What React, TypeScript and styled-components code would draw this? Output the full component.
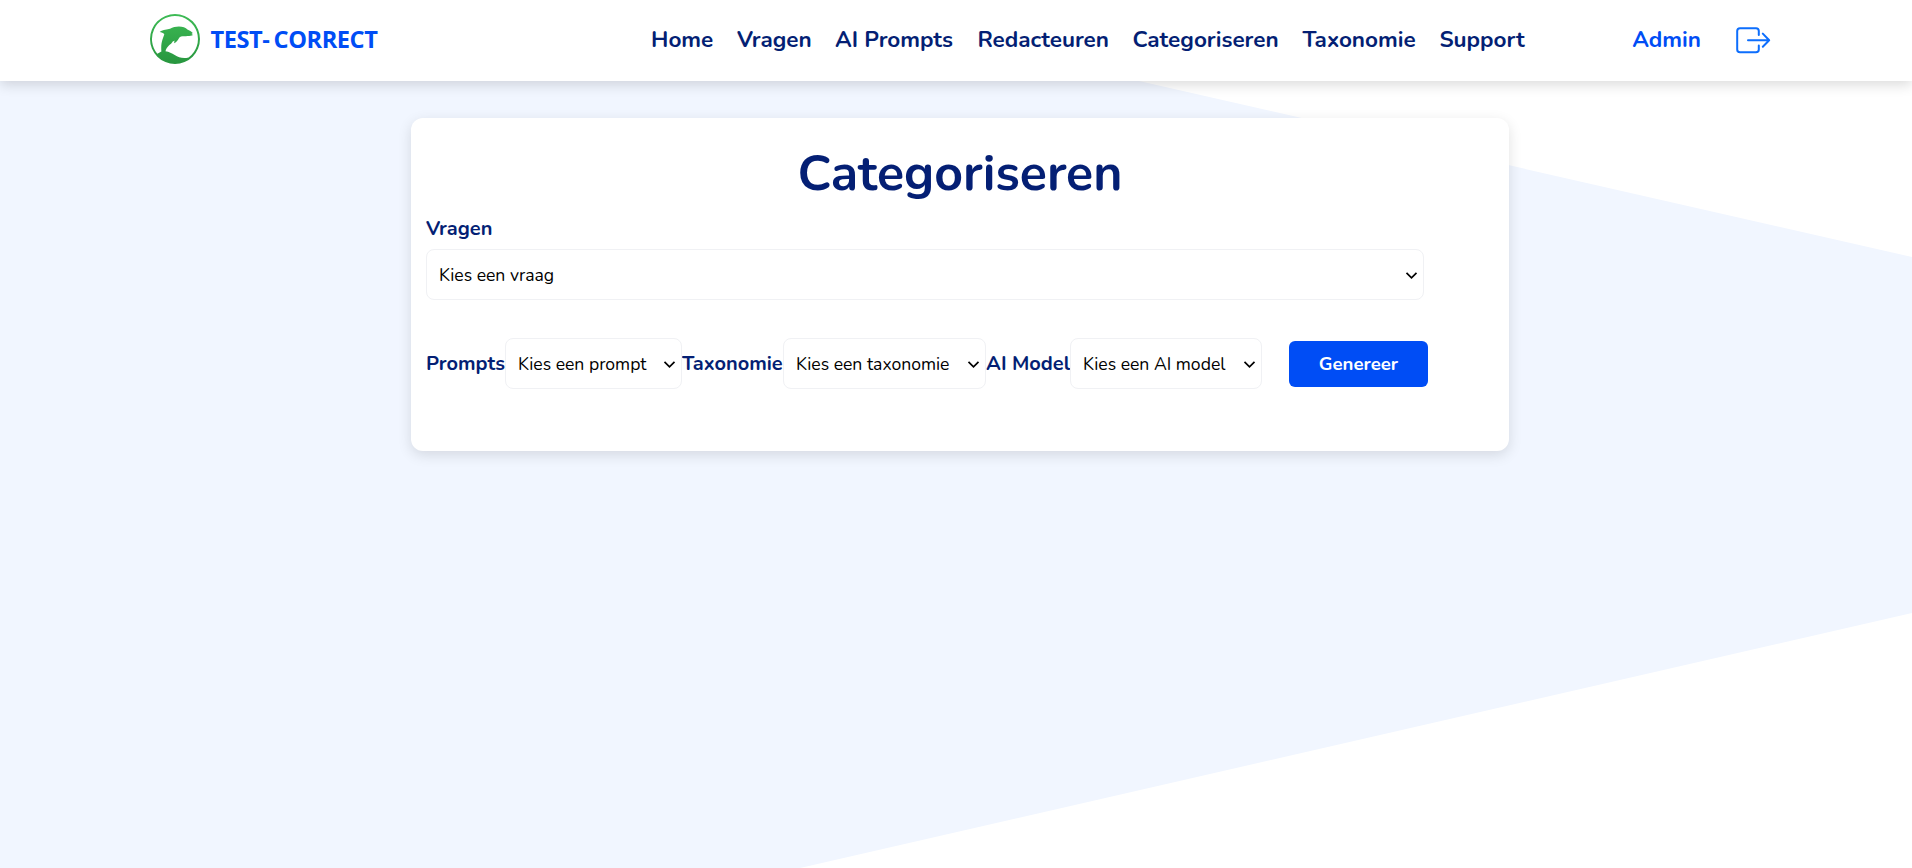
import React from 'react';
import styled, { createGlobalStyle } from 'styled-components';

const GlobalStyle = createGlobalStyle`
  *, *::before { box-sizing: border-box; }
  body { margin: 0; background: #fff; overflow: hidden; }
  body, select, button { font-family: Nunito, Lato, sans-serif; }
`;

const Page = styled.div`
  display: flex;
  flex-direction: column;
  height: 868px;
`;

const Header = styled.header`
  position: relative;
  z-index: 1;
  display: flex;
  align-items: center;
  flex: none;
  height: 81px;
  padding: 0 141px 0 150px;
  background: #fff;
  box-shadow: 0 4px 12px rgba(0, 0, 0, 0.14);
`;

const Brand = styled.a`
  display: flex;
  align-items: center;
  gap: 10.5px;
  width: 501px;
  padding-bottom: 3px;
`;

const BrandName = styled.span`
  display: flex;
  gap: 4px;
  font: 700 23.6px/32px 'Open Sans', sans-serif;
  letter-spacing: -0.42px;
  color: #004df5;
`;

const Nav = styled.nav`
  display: flex;
  flex: 1;
  padding-bottom: 1px;
`;

const NavLink = styled.a<{ $width: number }>`
  width: ${({ $width }) => $width}px;
  font-size: 22.5px;
  line-height: 30px;
  font-weight: 700;
  color: #041f74;
  white-space: nowrap;
`;

const Account = styled.div`
  display: flex;
  align-items: center;
  gap: 35px;
`;

const UserName = styled.span`
  padding-bottom: 1px;
  font-size: 22.5px;
  line-height: 30px;
  font-weight: 700;
  color: #004df5;
`;

const Main = styled.main`
  position: relative;
  flex: 1;
  padding: 37px 403px 0 411px;
  &::before {
    content: '';
    position: absolute;
    inset: 0;
    z-index: -1;
    background: #f1f6ff;
    clip-path: polygon(0 0, 1139px 0, 1912px 176px, 1912px 532px, 800px 787px, 0 787px);
  }
`;

const Card = styled.section`
  height: 333px;
  padding: 15px;
  border-radius: 12px;
  background: #fff;
  box-shadow: 0 4px 14px rgba(0, 0, 0, 0.12);
`;

const Title = styled.h1`
  margin: 7px 0 7px;
  font-size: 50px;
  line-height: 68px;
  font-weight: 700;
  text-align: center;
  color: #041f74;
`;

const Label = styled.label<{ $width?: number }>`
  display: block;
  flex: none;
  width: ${({ $width }) => ($width ? `${$width}px` : 'auto')};
  font-size: 20px;
  line-height: 27px;
  font-weight: 700;
  white-space: nowrap;
  color: #041f74;
`;

const SelectBox = styled.div<{ $width: number }>`
  position: relative;
  flex: none;
  width: ${({ $width }) => $width}px;
  svg {
    position: absolute;
    right: 6px;
    top: 22px;
    pointer-events: none;
  }
`;

const SelectField = styled.select`
  display: block;
  appearance: none;
  width: 100%;
  height: 51px;
  padding: 1px 12px 0;
  border: 1px solid #f0f1f4;
  border-radius: 8px;
  background: #fff;
  font-size: 17.6px;
  color: #000;
`;

const Question = styled.div`
  display: flex;
  flex-direction: column;
  gap: 7px;
`;

const Controls = styled.div`
  display: flex;
  align-items: center;
  margin-top: 38px;
  ${Label} { padding-bottom: 1px; }
`;

const Generate = styled.button`
  width: 139px;
  height: 46px;
  margin-left: 27px;
  padding: 0;
  border: 0;
  border-radius: 6px;
  background: #004df5;
  font-size: 18.6px;
  font-weight: 700;
  color: #fff;
`;

const DolphinLogo = () => (
  <svg width="50" height="50" viewBox="0 0 50 50">
    <defs>
      <linearGradient id="leaf" x1="0" y1="0" x2="0" y2="1">
        <stop offset="0" stopColor="#3dbb55" />
        <stop offset="1" stopColor="#28963f" />
      </linearGradient>
    </defs>
    <path fill="url(#leaf)" fillRule="evenodd" d="M25 0A25 25 0 1 1 25 50A25 25 0 1 1 25 0ZM25 2A23 23 0 0 0 7.3 39.7L11.4 37.6C10.5 28 13.3 24 14.3 20.2C13.1 18.8 11.4 18.3 9.7 18C13.4 15.3 17.3 15.8 20 14.8C26 11.1 34.7 11.9 37.4 15.6C39.3 16.6 41.7 17.6 42.8 19.1L41.5 19.9L43 20.9C40.5 22.7 35 21.5 31 22.5C28.4 23.2 28.4 27.3 24.1 29.2L24.5 26.5L22.5 27.8C21.3 30.5 16.5 32 15.5 37.3C23.8 38.5 28.3 46.3 38.6 43.5A23 23 0 0 0 25 2Z" />
  </svg>
);

const LogoutIcon = () => (
  <svg width="35" height="27" viewBox="0 0 35 27" fill="none" stroke="#0d6efd" strokeWidth="2" strokeLinecap="round" strokeLinejoin="round">
    <path d="M22.8 8V4Q22.8 1.2 20 1.2H4Q1.2 1.2 1.2 4V22.4Q1.2 25.2 4 25.2H20Q22.8 25.2 22.8 22.4V18.4M12 13.2H33.2M26.8 6.6L33.2 13.2L26.8 19.8" />
  </svg>
);

const Select = ({ text, width }: { text: string; width: number }) => (
  <SelectBox $width={width}>
    <SelectField><option>{text}</option></SelectField>
    <svg width="13" height="9" viewBox="0 0 13 9" fill="none" stroke="#000" strokeWidth="1.7">
      <path d="M1.5 1.8L6.5 6.8L11.5 1.8" />
    </svg>
  </SelectBox>
);

const links: [string, number][] = [
  ['Home', 86], ['Vragen', 98], ['AI Prompts', 142.4], ['Redacteuren', 155],
  ['Categoriseren', 170], ['Taxonomie', 137], ['Support', 88],
];

export default function App() {
  return (
    <Page>
      <GlobalStyle />
      <Header>
        <Brand>
          <DolphinLogo />
          <BrandName><span>TEST-</span><span>CORRECT</span></BrandName>
        </Brand>
        <Nav>
          {links.map(([text, width]) => <NavLink key={text} $width={width}>{text}</NavLink>)}
        </Nav>
        <Account>
          <UserName>Admin</UserName>
          <LogoutIcon />
        </Account>
      </Header>
      <Main>
        <Card>
          <Title>Categoriseren</Title>
          <Question>
            <Label>Vragen</Label>
            <Select width={998} text="Kies een vraag" />
          </Question>
          <Controls>
            <Label $width={79}>Prompts</Label>
            <Select width={177} text="Kies een prompt" />
            <Label $width={101}>Taxonomie</Label>
            <Select width={203} text="Kies een taxonomie" />
            <Label $width={84}>AI Model</Label>
            <Select width={192} text="Kies een AI model" />
            <Generate>Genereer</Generate>
          </Controls>
        </Card>
      </Main>
    </Page>
  );
}
